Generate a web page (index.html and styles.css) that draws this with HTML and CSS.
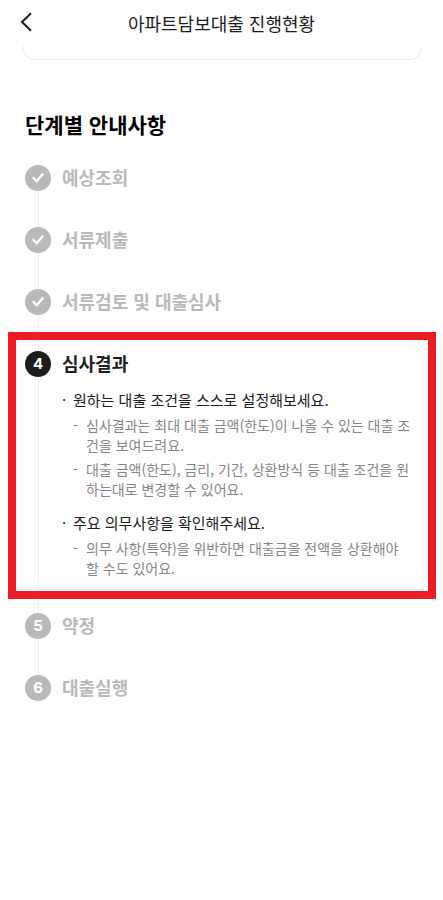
FILE: index.html
```html
<!DOCTYPE html>
<html lang="ko">
<head>
    <meta charset="UTF-8">
    <meta name="viewport" content="width=device-width, initial-scale=1.0">
    <title>아파트담보대출 진행현황</title>
    <link rel="stylesheet" href="styles.css">
</head>
<body>
    <header class="header">
        <button class="back" type="button" aria-label="뒤로">
            <svg width="14" height="22" viewBox="0 0 14 22" fill="none" stroke="#1c1c1c" stroke-width="2">
                <path d="M13 1.2 L4 10 L13 18.8"/>
            </svg>
        </button>
        <h1 class="header-title">아파트담보대출 진행현황</h1>
    </header>
    <main>
        <div class="card-end"></div>
        <section class="guide">
            <h2 class="guide-title">단계별 안내사항</h2>
            <ol class="steps">
                <li class="step">
                    <span class="badge">
                        <svg class="check" width="26" height="26" viewBox="0 0 26 26"><path d="M7.8 12.3 L11.7 16.3 L18.3 8.6"/></svg>
                    </span>
                    <h3 class="step-title">예상조회</h3>
                </li>
                <li class="step">
                    <span class="badge">
                        <svg class="check" width="26" height="26" viewBox="0 0 26 26"><path d="M7.8 12.3 L11.7 16.3 L18.3 8.6"/></svg>
                    </span>
                    <h3 class="step-title">서류제출</h3>
                </li>
                <li class="step">
                    <span class="badge">
                        <svg class="check" width="26" height="26" viewBox="0 0 26 26"><path d="M7.8 12.3 L11.7 16.3 L18.3 8.6"/></svg>
                    </span>
                    <h3 class="step-title">서류검토 및 대출심사</h3>
                </li>
                <li class="step current">
                    <span class="badge">4</span>
                    <div class="step-body">
                        <h3 class="step-title">심사결과</h3>
                        <ul class="notes">
                            <li class="note">
                                <p class="note-title">원하는 대출 조건을 스스로 설정해보세요.</p>
                                <ul class="details">
                                    <li>심사결과는 최대 대출 금액(한도)이 나올 수 있는 대출 조건을 보여드려요.</li>
                                    <li>대출 금액(한도), 금리, 기간, 상환방식 등 대출 조건을 원하는대로 변경할 수 있어요.</li>
                                </ul>
                            </li>
                            <li class="note">
                                <p class="note-title">주요 의무사항을 확인해주세요.</p>
                                <ul class="details">
                                    <li>의무 사항(특약)을 위반하면 대출금을 전액을 상환해야 할 수도 있어요.</li>
                                </ul>
                            </li>
                        </ul>
                    </div>
                </li>
                <li class="step">
                    <span class="badge">5</span>
                    <h3 class="step-title">약정</h3>
                </li>
                <li class="step">
                    <span class="badge">6</span>
                    <h3 class="step-title">대출실행</h3>
                </li>
            </ol>
        </section>
    </main>
</body>
</html>
```
FILE: styles.css
```css
* {
    margin: 0;
    padding: 0;
    box-sizing: border-box;
}

body {
    background-color: #fff;
    color: #1c1c1c;
    font-family: "Noto Sans CJK KR", sans-serif;
}

ul, ol {
    list-style: none;
}

/* Header */
.header {
    display: grid;
    grid-template-columns: 24px 1fr 24px;
    align-items: center;
    height: 46px;
    padding: 0 18px;
}

.back {
    display: flex;
    height: 22px;
    border: none;
    background: none;
    cursor: pointer;
}

.header-title {
    font-size: 18px;
    font-weight: 400;
    line-height: 26px;
    text-align: center;
}

/* Bottom edge of the card scrolled under the header */
.card-end {
    height: 14px;
    margin: 0 21px 0 23px;
    border: 1px solid #eee;
    border-top: none;
    border-radius: 0 0 12px 12px;
}

/* Steps */
.guide {
    padding: 48px 24px 48px 25px;
}

.guide-title {
    margin-bottom: 25px;
    color: #000;
    font-size: 21px;
    font-weight: 700;
    line-height: 32px;
}

.step {
    position: relative;
    display: flex;
    gap: 11px;
    min-height: 62px;
    color: #b9b9b9;
}

.step:not(:last-child)::before {
    content: "";
    position: absolute;
    top: 0;
    bottom: 0;
    left: 13px;
    width: 1px;
    background-color: #eee;
}

.badge {
    position: relative;
    display: flex;
    flex: none;
    justify-content: center;
    width: 26px;
    height: 26px;
    border-radius: 50%;
    background-color: #b9b9b9;
    color: #fff;
    font-family: Inter, sans-serif;
    font-size: 15px;
    font-weight: 700;
    line-height: 26px;
}

.check {
    fill: none;
    stroke: #fff;
    stroke-width: 2.3;
}

.step-title {
    font-size: 18px;
    font-weight: 700;
    line-height: 24px;
}

/* Current step */
.current {
    padding-bottom: 35px;
    color: #1c1c1c;
}

.current::after {
    content: "";
    position: absolute;
    top: -19px;
    right: -17px;
    bottom: 14px;
    left: -17px;
    border: 8px solid #ed1c24;
    pointer-events: none;
}

.current .badge {
    background-color: #1c1c1c;
}

.notes {
    display: flex;
    flex-direction: column;
    gap: 12px;
    margin-top: 13px;
}

.note {
    display: grid;
    grid-template-columns: 11px 1fr;
}

.note::before {
    content: "·";
    font-size: 15px;
    line-height: 24px;
}

.note-title {
    font-size: 15px;
    line-height: 24px;
}

.details {
    display: flex;
    flex-direction: column;
    grid-column: 2;
    gap: 4px;
    margin-top: 3px;
    color: #868686;
    font-size: 14px;
    line-height: 20px;
}

.details li {
    display: grid;
    grid-template-columns: 13px 1fr;
    padding-right: 4px;
}

.details li::before {
    content: "-";
}
```
